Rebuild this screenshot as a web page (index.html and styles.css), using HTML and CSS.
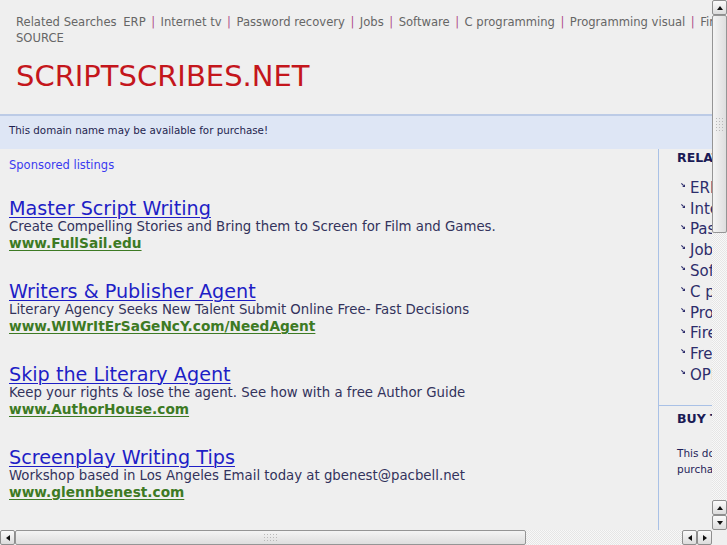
FILE: index.html
```html
<!DOCTYPE html>
<html>
<head>
<meta charset="utf-8">
<title>scriptscribes.net</title>
<link rel="stylesheet" href="styles.css">
</head>
<body>
<div class="page">
  <header class="header">
    <div class="related">
      <span class="rs-label">Related Searches</span>
      <a href="#">ERP</a><span class="sep">|</span><a href="#">Internet tv</a><span class="sep">|</span><a href="#">Password recovery</a><span class="sep">|</span><a href="#">Jobs</a><span class="sep">|</span><a href="#">Software</a><span class="sep">|</span><a href="#">C programming</a><span class="sep">|</span><a href="#">Programming visual</a><span class="sep">|</span><a href="#">Firefox</a><span class="sep">|</span><a href="#">Freeware</a><span class="sep">|</span><a href="#">OPEN</a><br><a href="#">SOURCE</a>
    </div>
    <h1 class="site-title">SCRIPTSCRIBES.NET</h1>
  </header>

  <div class="band">This domain name may be available for purchase!</div>

  <div class="main">
    <section class="left">
      <div class="sponsored">Sponsored listings</div>

      <div class="ad">
        <a class="ad-title" href="#">Master Script Writing</a>
        <div class="ad-desc">Create Compelling Stories and Bring them to Screen for Film and Games.</div>
        <a class="ad-url" href="#">www.FullSail.edu</a>
      </div>

      <div class="ad">
        <a class="ad-title" href="#">Writers &amp; Publisher Agent</a>
        <div class="ad-desc">Literary Agency Seeks New Talent Submit Online Free- Fast Decisions</div>
        <a class="ad-url" href="#">www.WIWrItErSaGeNcY.com/NeedAgent</a>
      </div>

      <div class="ad">
        <a class="ad-title" href="#">Skip the Literary Agent</a>
        <div class="ad-desc">Keep your rights &amp; lose the agent. See how with a free Author Guide</div>
        <a class="ad-url" href="#">www.AuthorHouse.com</a>
      </div>

      <div class="ad">
        <a class="ad-title" href="#">Screenplay Writing Tips</a>
        <div class="ad-desc">Workshop based in Los Angeles Email today at gbenest@pacbell.net</div>
        <a class="ad-url" href="#">www.glennbenest.com</a>
      </div>
    </section>

    <aside class="right">
      <div class="side-block">
        <h2 class="side-head">RELATED SEARCHES</h2>
        <ul class="side-list">
          <li><svg class="bullet" viewBox="0 0 4 4" width="4" height="4"><path d="M0.4 0.4 L2.6 2.6" stroke="#2a2a6a" stroke-width="1.1" fill="none"/><path d="M4 1.2 L4 4 L1.2 4 Z" fill="#2a2a6a"/></svg><a href="#">ERP</a></li>
          <li><svg class="bullet" viewBox="0 0 4 4" width="4" height="4"><path d="M0.4 0.4 L2.6 2.6" stroke="#2a2a6a" stroke-width="1.1" fill="none"/><path d="M4 1.2 L4 4 L1.2 4 Z" fill="#2a2a6a"/></svg><a href="#">Internet tv</a></li>
          <li><svg class="bullet" viewBox="0 0 4 4" width="4" height="4"><path d="M0.4 0.4 L2.6 2.6" stroke="#2a2a6a" stroke-width="1.1" fill="none"/><path d="M4 1.2 L4 4 L1.2 4 Z" fill="#2a2a6a"/></svg><a href="#">Password recovery</a></li>
          <li><svg class="bullet" viewBox="0 0 4 4" width="4" height="4"><path d="M0.4 0.4 L2.6 2.6" stroke="#2a2a6a" stroke-width="1.1" fill="none"/><path d="M4 1.2 L4 4 L1.2 4 Z" fill="#2a2a6a"/></svg><a href="#">Jobs</a></li>
          <li><svg class="bullet" viewBox="0 0 4 4" width="4" height="4"><path d="M0.4 0.4 L2.6 2.6" stroke="#2a2a6a" stroke-width="1.1" fill="none"/><path d="M4 1.2 L4 4 L1.2 4 Z" fill="#2a2a6a"/></svg><a href="#">Software</a></li>
          <li><svg class="bullet" viewBox="0 0 4 4" width="4" height="4"><path d="M0.4 0.4 L2.6 2.6" stroke="#2a2a6a" stroke-width="1.1" fill="none"/><path d="M4 1.2 L4 4 L1.2 4 Z" fill="#2a2a6a"/></svg><a href="#">C programming</a></li>
          <li><svg class="bullet" viewBox="0 0 4 4" width="4" height="4"><path d="M0.4 0.4 L2.6 2.6" stroke="#2a2a6a" stroke-width="1.1" fill="none"/><path d="M4 1.2 L4 4 L1.2 4 Z" fill="#2a2a6a"/></svg><a href="#">Programming visual</a></li>
          <li><svg class="bullet" viewBox="0 0 4 4" width="4" height="4"><path d="M0.4 0.4 L2.6 2.6" stroke="#2a2a6a" stroke-width="1.1" fill="none"/><path d="M4 1.2 L4 4 L1.2 4 Z" fill="#2a2a6a"/></svg><a href="#">Firefox</a></li>
          <li><svg class="bullet" viewBox="0 0 4 4" width="4" height="4"><path d="M0.4 0.4 L2.6 2.6" stroke="#2a2a6a" stroke-width="1.1" fill="none"/><path d="M4 1.2 L4 4 L1.2 4 Z" fill="#2a2a6a"/></svg><a href="#">Freeware</a></li>
          <li><svg class="bullet" viewBox="0 0 4 4" width="4" height="4"><path d="M0.4 0.4 L2.6 2.6" stroke="#2a2a6a" stroke-width="1.1" fill="none"/><path d="M4 1.2 L4 4 L1.2 4 Z" fill="#2a2a6a"/></svg><a href="#">OPEN SOURCE</a></li>
        </ul>
      </div>
      <div class="side-block buy">
        <h2 class="side-head">BUY THIS DOMAIN</h2>
        <p class="buy-text">This domain name may be available for<br>purchase. Click here to inquire.</p>
      </div>
    </aside>
  </div>
</div>

<div class="vscroll">
  <div class="sb-btn"><span class="tri tri-up"></span></div>
  <div class="v-track">
    <div class="v-thumb"><span class="grip"></span></div>
  </div>
  <div class="sb-btn"><span class="tri tri-up"></span></div>
  <div class="sb-btn"><span class="tri tri-down"></span></div>
</div>
<div class="hscroll">
  <div class="sb-btn"><span class="tri tri-left"></span></div>
  <div class="h-track">
    <div class="h-thumb"><span class="grip"></span></div>
  </div>
  <div class="sb-btn"><span class="tri tri-left"></span></div>
  <div class="sb-btn"><span class="tri tri-right"></span></div>
</div>
<div class="corner"></div>
</body>
</html>
```

FILE: styles.css
```css
html, body {
  margin: 0;
  padding: 0;
  overflow: hidden;
  height: 100%;
}
body {
  background: #efefef;
  font-family: "DejaVu Sans", "Bitstream Vera Sans", sans-serif;
  color: #333;
}
a { text-decoration: none; }

.page {
  width: 927px;
}

.header {
  padding: 14px 16px 0 16px;
}
.related {
  font-size: 11.58px;
  line-height: 16px;
  color: #666;
  white-space: nowrap;
}
.related a { color: #666; }
.rs-label { margin-right: 3px; }
.sep {
  color: #b0508c;
  margin: 0 5.5px;
}
.site-title {
  margin: 13px 0 0 0;
  font-size: 29px;
  line-height: 34px;
  font-weight: normal;
  color: #c4161c;
}

.band {
  margin-top: 21px;
  border-top: 2px solid #bccbe6;
  background: #dee6f5;
  height: 33px;
  line-height: 28px;
  padding-left: 9px;
  font-size: 10.3px;
  color: #1f1f4f;
}

.main {
  display: flex;
  min-height: 420px;
}
.left {
  width: 649px;
  padding-left: 9px;
  border-right: 1px solid #a9c1e6;
}
.sponsored {
  margin-top: 9px;
  font-size: 11.5px;
  line-height: 14px;
  color: #3a3af0;
}
.ad {
  margin-top: 27px;
  display: flex;
  flex-direction: column;
  align-items: flex-start;
}
.ad + .ad { margin-top: 30.9px; }
.ad-title {
  font-size: 19.2px;
  line-height: 20px;
  color: #1e1ec6;
  text-decoration: underline;
  text-decoration-thickness: 1px;
  text-underline-offset: 2px;
}
.ad-desc {
  font-size: 13.3px;
  line-height: 16px;
  color: #33335c;
  white-space: nowrap;
}
.ad-url {
  font-size: 13.7px;
  line-height: 16px;
  font-weight: bold;
  color: #3d7a24;
  text-decoration: underline;
  text-decoration-thickness: 1px;
  text-underline-offset: 2px;
}

.right {
  flex: 1;
}
.side-block {
  padding: 1px 0 0 18px;
}
.side-head {
  margin: 0;
  font-size: 12.5px;
  line-height: 16px;
  font-weight: bold;
  color: #1b1b55;
  white-space: nowrap;
}
.side-list {
  list-style: none;
  margin: 11.4px 0 0 0;
  padding: 0 0 19.2px 0;
}
.side-list li {
  display: flex;
  align-items: center;
  height: 20.8px;
  font-size: 15px;
  white-space: nowrap;
}
.side-list a { color: #2d2d6b; }
.bullet {
  align-self: flex-start;
  margin: 5.6px 5px 0 4px;
  flex: none;
}
.buy {
  border-top: 1px solid #a9c1e6;
  padding-top: 5px;
}
.buy-text {
  margin: 18px 0 0 0;
  font-size: 10.5px;
  line-height: 16.5px;
  color: #1f1f5a;
  white-space: nowrap;
}

/* scrollbars */
.vscroll {
  position: fixed;
  top: 0;
  right: 0;
  width: 15px;
  height: 530px;
  display: flex;
  flex-direction: column;
  background: #f1f1f1;
}
.hscroll {
  position: fixed;
  left: 0;
  bottom: 0;
  width: 712px;
  height: 15px;
  display: flex;
  background: #f1f1f1;
}
.corner {
  position: fixed;
  right: 0;
  bottom: 0;
  width: 15px;
  height: 15px;
  background: #efefef;
}
.sb-btn {
  flex: none;
  box-sizing: border-box;
  width: 15px;
  height: 15px;
  border: 1px solid #8e8e8e;
  border-radius: 2px;
  background: linear-gradient(#fbfbfb, #dcdcdc);
  display: flex;
  align-items: center;
  justify-content: center;
}
.tri {
  width: 0;
  height: 0;
  border: 3.5px solid transparent;
}
.tri-up { border-bottom: 4px solid #111; border-top-width: 0; }
.tri-down { border-top: 4px solid #111; border-bottom-width: 0; }
.tri-left { border-right: 4px solid #111; border-left-width: 0; }
.tri-right { border-left: 4px solid #111; border-right-width: 0; }

.v-track, .h-track {
  flex: 1;
  background-color: #f6f6f6;
  background-image: repeating-conic-gradient(#e6e6e6 0 25%, #f8f8f8 0 50%);
  background-size: 2px 2px;
  display: flex;
}
.v-track { flex-direction: column; padding-bottom: 2px; }
.v-thumb {
  box-sizing: border-box;
  height: 218px;
  width: 15px;
  border: 1px solid #959595;
  border-radius: 2px;
  background: linear-gradient(90deg, #f4f4f4, #dedede);
  display: flex;
  align-items: center;
  justify-content: center;
}
.h-thumb {
  box-sizing: border-box;
  width: 511px;
  height: 15px;
  border: 1px solid #959595;
  border-radius: 2px;
  background: linear-gradient(#f4f4f4, #dedede);
  display: flex;
  align-items: center;
  justify-content: center;
}
.grip {
  width: 9px;
  height: 9px;
  background-image: radial-gradient(circle, #b9b9b9 0.8px, transparent 1px);
  background-size: 3px 3px;
}
.v-thumb .grip { height: 15px; }
.h-thumb .grip { width: 15px; }
```
